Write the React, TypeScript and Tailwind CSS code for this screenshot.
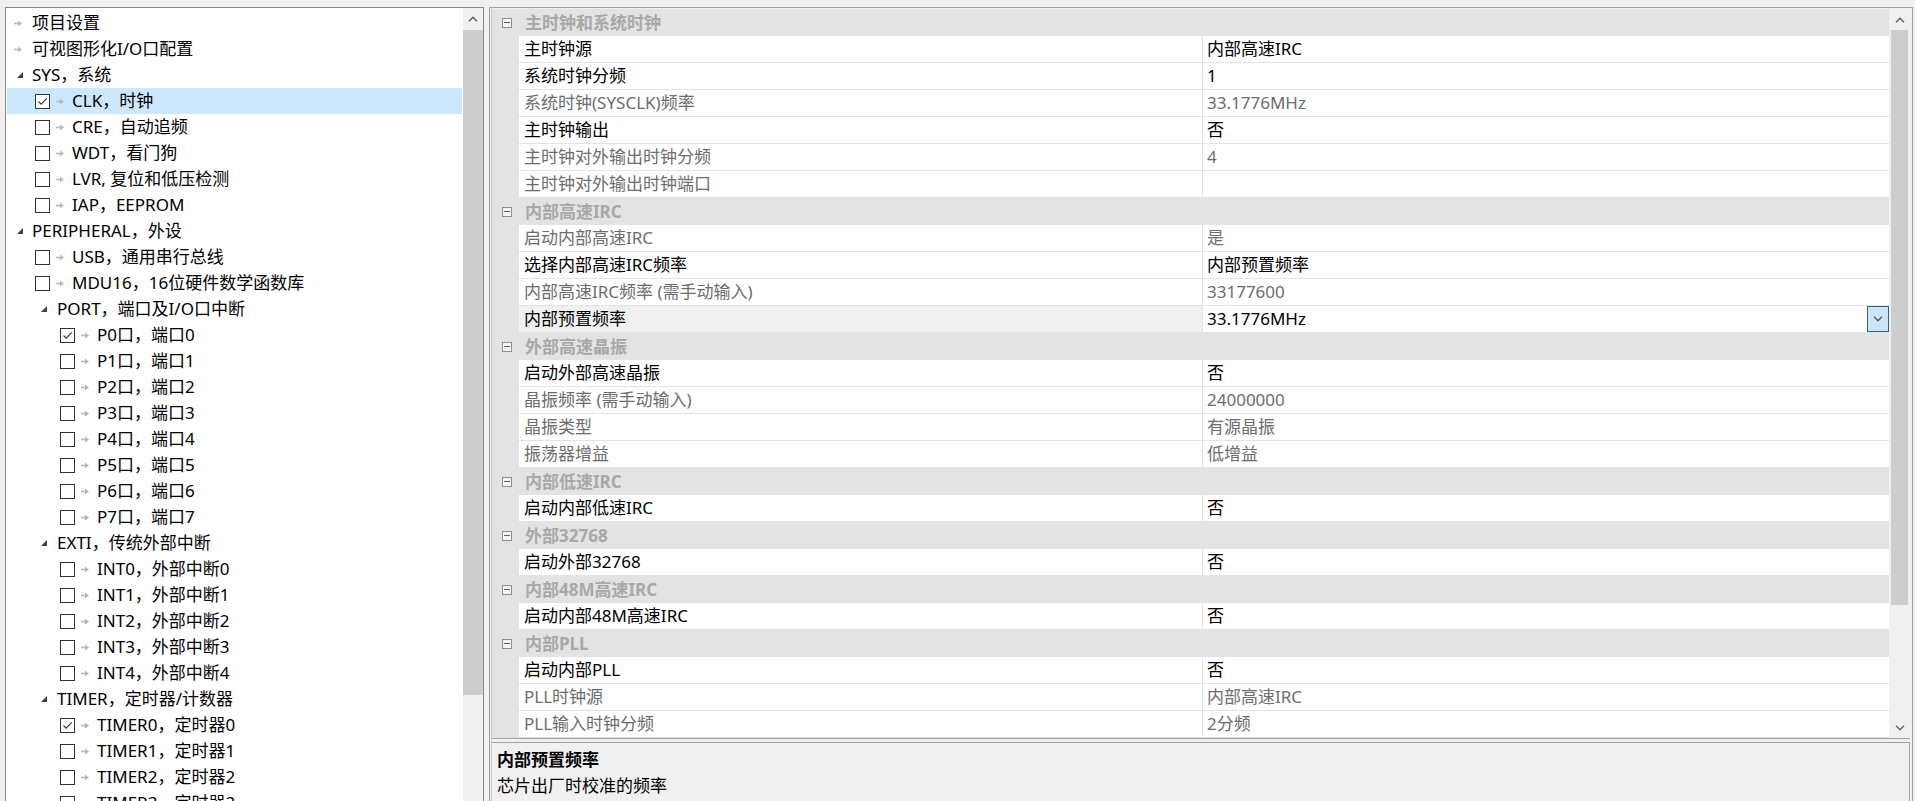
import React from "react";

type Kind = "l0leaf" | "l0exp" | "l1check" | "l1exp" | "l2check";
type TreeItem = { kind: Kind; text: string; checked?: boolean; selected?: boolean };

const tree: TreeItem[] = [
  { kind: "l0leaf", text: "项目设置" },
  { kind: "l0leaf", text: "可视图形化I/O口配置" },
  { kind: "l0exp", text: "SYS，系统" },
  { kind: "l1check", text: "CLK，时钟", checked: true, selected: true },
  { kind: "l1check", text: "CRE，自动追频" },
  { kind: "l1check", text: "WDT，看门狗" },
  { kind: "l1check", text: "LVR, 复位和低压检测" },
  { kind: "l1check", text: "IAP，EEPROM" },
  { kind: "l0exp", text: "PERIPHERAL，外设" },
  { kind: "l1check", text: "USB，通用串行总线" },
  { kind: "l1check", text: "MDU16，16位硬件数学函数库" },
  { kind: "l1exp", text: "PORT，端口及I/O口中断" },
  { kind: "l2check", text: "P0口，端口0", checked: true },
  { kind: "l2check", text: "P1口，端口1" },
  { kind: "l2check", text: "P2口，端口2" },
  { kind: "l2check", text: "P3口，端口3" },
  { kind: "l2check", text: "P4口，端口4" },
  { kind: "l2check", text: "P5口，端口5" },
  { kind: "l2check", text: "P6口，端口6" },
  { kind: "l2check", text: "P7口，端口7" },
  { kind: "l1exp", text: "EXTI，传统外部中断" },
  { kind: "l2check", text: "INT0，外部中断0" },
  { kind: "l2check", text: "INT1，外部中断1" },
  { kind: "l2check", text: "INT2，外部中断2" },
  { kind: "l2check", text: "INT3，外部中断3" },
  { kind: "l2check", text: "INT4，外部中断4" },
  { kind: "l1exp", text: "TIMER，定时器/计数器" },
  { kind: "l2check", text: "TIMER0，定时器0", checked: true },
  { kind: "l2check", text: "TIMER1，定时器1" },
  { kind: "l2check", text: "TIMER2，定时器2" },
  { kind: "l2check", text: "TIMER3，定时器3" },
];

type GridRow =
  | { cat: string }
  | { label: string; value: string; on: boolean; selected?: boolean };

const rows: GridRow[] = [
  { cat: "主时钟和系统时钟" },
  { label: "主时钟源", value: "内部高速IRC", on: true },
  { label: "系统时钟分频", value: "1", on: true },
  { label: "系统时钟(SYSCLK)频率", value: "33.1776MHz", on: false },
  { label: "主时钟输出", value: "否", on: true },
  { label: "主时钟对外输出时钟分频", value: "4", on: false },
  { label: "主时钟对外输出时钟端口", value: "", on: false },
  { cat: "内部高速IRC" },
  { label: "启动内部高速IRC", value: "是", on: false },
  { label: "选择内部高速IRC频率", value: "内部预置频率", on: true },
  { label: "内部高速IRC频率 (需手动输入)", value: "33177600", on: false },
  { label: "内部预置频率", value: "33.1776MHz", on: true, selected: true },
  { cat: "外部高速晶振" },
  { label: "启动外部高速晶振", value: "否", on: true },
  { label: "晶振频率 (需手动输入)", value: "24000000", on: false },
  { label: "晶振类型", value: "有源晶振", on: false },
  { label: "振荡器增益", value: "低增益", on: false },
  { cat: "内部低速IRC" },
  { label: "启动内部低速IRC", value: "否", on: true },
  { cat: "外部32768" },
  { label: "启动外部32768", value: "否", on: true },
  { cat: "内部48M高速IRC" },
  { label: "启动内部48M高速IRC", value: "否", on: true },
  { cat: "内部PLL" },
  { label: "启动内部PLL", value: "否", on: true },
  { label: "PLL时钟源", value: "内部高速IRC", on: false },
  { label: "PLL输入时钟分频", value: "2分频", on: false },
];

function Arrow() {
  return (
    <svg width="8" height="7" viewBox="0 0 8 7" className="shrink-0">
      <path d="M0 3.5h4.5" stroke="#b8b8b8" strokeWidth="1.6" />
      <path d="M4 0.5L8 3.5L4 6.5Z" fill="#b8b8b8" />
    </svg>
  );
}

function Tri() {
  return (
    <svg width="6" height="6" viewBox="0 0 6 6" className="shrink-0">
      <path d="M6 0L6 6L0 6Z" fill="#404040" />
    </svg>
  );
}

function Check({ checked }: { checked?: boolean }) {
  return (
    <div className="w-[15px] h-[15px] border border-[#333333] bg-white shrink-0 flex items-center justify-center">
      {checked && (
        <svg width="13" height="13" viewBox="0 0 13 13">
          <path d="M2.5 6.5L5.2 9.2L10.8 3.4" stroke="#333333" strokeWidth="1.1" fill="none" />
        </svg>
      )}
    </div>
  );
}

function TreeRow({ item }: { item: TreeItem }) {
  const bg = item.selected ? "bg-[#cce8ff]" : "";
  if (item.kind === "l0leaf")
    return (
      <div className={`h-[26px] flex items-center pl-[7px] ${bg}`}>
        <Arrow />
        <span className="ml-[10px] whitespace-nowrap">{item.text}</span>
      </div>
    );
  if (item.kind === "l0exp")
    return (
      <div className={`h-[26px] flex items-center pl-[10px] ${bg}`}>
        <Tri />
        <span className="ml-[9px] whitespace-nowrap">{item.text}</span>
      </div>
    );
  if (item.kind === "l1exp")
    return (
      <div className={`h-[26px] flex items-center pl-[34px] ${bg}`}>
        <Tri />
        <span className="ml-[10px] whitespace-nowrap">{item.text}</span>
      </div>
    );
  if (item.kind === "l1check")
    return (
      <div className={`h-[26px] flex items-center pl-[28px] mr-[1px] ${bg}`}>
        <Check checked={item.checked} />
        <span className="ml-[6px] flex">
          <Arrow />
        </span>
        <span className="ml-[8px] whitespace-nowrap">{item.text}</span>
      </div>
    );
  return (
    <div className={`h-[26px] flex items-center pl-[53px] ${bg}`}>
      <Check checked={item.checked} />
      <span className="ml-[6px] flex">
        <Arrow />
      </span>
      <span className="ml-[8px] whitespace-nowrap">{item.text}</span>
    </div>
  );
}

function ChevUp() {
  return (
    <svg width="10" height="6" viewBox="0 0 10 6">
      <path d="M1 5.2L5 1.2L9 5.2" stroke="#606060" strokeWidth="1.5" fill="none" />
    </svg>
  );
}

function ChevDown({ color = "#606060" }: { color?: string }) {
  return (
    <svg width="10" height="6" viewBox="0 0 10 6">
      <path d="M1 0.8L5 4.8L9 0.8" stroke={color} strokeWidth="1.3" fill="none" />
    </svg>
  );
}

function MinusBox() {
  return (
    <div className="w-[10px] h-[10px] border border-[#8f8f8f] bg-[#f4f4f4] flex items-center justify-center shrink-0">
      <div className="w-[6px] h-px bg-[#606060]" />
    </div>
  );
}

function Row({ r }: { r: GridRow }) {
  if ("cat" in r)
    return (
      <div className="h-[27px] bg-[#e3e3e3] flex items-center pl-[10px]">
        <MinusBox />
        <span className="ml-[13px] font-bold text-[#a8a8a8] whitespace-nowrap">{r.cat}</span>
      </div>
    );
  const color = r.on ? "text-black" : "text-[#6d6d6d]";
  return (
    <div className="h-[27px] flex">
      <div className="w-[27px] bg-[#e3e3e3] shrink-0" />
      <div className="flex-1 flex border-b border-[#e3e3e3]">
        <div
          className={`w-[683px] shrink-0 pl-[5px] flex items-center whitespace-nowrap ${color} ${
            r.selected ? "bg-[#f0f0f0]" : "bg-white"
          }`}
        >
          {r.label}
        </div>
        <div className="w-px bg-[#e3e3e3] shrink-0" />
        <div className={`flex-1 pl-[4px] flex items-center bg-white whitespace-nowrap ${color}`}>
          <span className="flex-1">{r.value}</span>
          {r.selected && (
            <div className="w-[22px] h-[26px] bg-[#cce4f7] border border-[#2c628b] flex items-center justify-center">
              <ChevDown color="#555555" />
            </div>
          )}
        </div>
      </div>
    </div>
  );
}

export default function App() {
  return (
    <div className="w-[1915px] h-[801px] overflow-hidden bg-[#f0f0f0] pt-[7px] flex items-start text-[17px] leading-[26px] text-black font-['Noto_Sans','Noto_Sans_CJK_SC',sans-serif]">
      {/* Left tree panel */}
      <div className="ml-[5px] w-[479px] h-[830px] border border-[#828790] bg-white flex shrink-0">
        <div className="flex-1 pt-[2px] pl-[1px] overflow-hidden">
          {tree.map((it, i) => (
            <TreeRow key={i} item={it} />
          ))}
        </div>
        <div className="w-[20px] bg-[#f0f0f0] flex flex-col shrink-0">
          <div className="h-[22px] flex items-center justify-center">
            <ChevUp />
          </div>
          <div className="h-[665px] bg-[#cdcdcd]" />
        </div>
      </div>

      {/* Right property panel */}
      <div className="ml-[5px] w-[1424px] h-[830px] border border-[#a0a0a0] bg-[#f0f0f0] shrink-0">
        <div className="ml-[1px] h-full border-l border-[#c8c8c8] pr-[2px] flex flex-col">
          <div className="pt-[1px] flex border-b border-[#a0a0a0]">
            <div className="w-[1397px] shrink-0 bg-white">
              {rows.map((r, i) => (
                <Row key={i} r={r} />
              ))}
            </div>
            <div className="w-[21px] bg-[#f0f0f0] flex flex-col shrink-0">
              <div className="h-[21px] flex items-center justify-center">
                <ChevUp />
              </div>
              <div className="h-[575px] mx-[2px] bg-[#cdcdcd]" />
              <div className="flex-1" />
              <div className="h-[21px] flex items-center justify-center">
                <ChevDown />
              </div>
            </div>
          </div>
          <div className="h-[3px]" />
          <div className="flex-1 border-t border-r border-[#a0a0a0] bg-[#f0f0f0] pt-[4px] pl-[5px]">
            <div className="font-bold">内部预置频率</div>
            <div>芯片出厂时校准的频率</div>
          </div>
        </div>
      </div>
    </div>
  );
}
